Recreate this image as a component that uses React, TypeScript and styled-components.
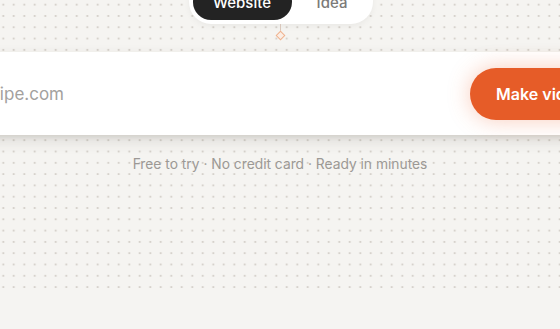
import styled, { createGlobalStyle } from "styled-components";

const GlobalStyle = createGlobalStyle`
    html, body {
        margin: 0;
        padding: 0;
        background: #f5f4f1;
        overflow: hidden;
        font-family: "Inter", "Noto Sans", sans-serif;
    }
`;

const modes = ["Website", "Idea"];

const ArrowIcon = () => (
    <svg width="16" height="16" viewBox="0 0 24 24" fill="none" stroke="currentColor" strokeWidth="2.2" strokeLinecap="round" strokeLinejoin="round">
        <path d="M5 12h14" />
        <path d="M13 6l6 6-6 6" />
    </svg>
);

export default function App() {
    return (
        <>
            <GlobalStyle />
            <Page>
                <Hero>
                    <Toggle>
                        {modes.map((mode, i) => (
                            <ToggleOption key={mode} $active={i === 0}>{mode}</ToggleOption>
                        ))}
                    </Toggle>
                    <Connector>
                        <Stem />
                        <Knot />
                    </Connector>
                    <Card>
                        <UrlInput placeholder="yourrecipe.com" readOnly />
                        <MakeButton>
                            Make video
                            <ArrowIcon />
                        </MakeButton>
                    </Card>
                    <Caption>Free to try · No credit card · Ready in minutes</Caption>
                </Hero>
                <Footer />
            </Page>
        </>
    );
}

const Page = styled.div`
    display: flex;
    flex-direction: column;
    width: 560px;
    height: 329px;
    overflow: hidden;
`;

const Hero = styled.div`
    display: flex;
    flex-direction: column;
    align-items: center;
    height: 290px;
    background-color: #f5f4f1;
    background-image: radial-gradient(circle, #d0cbc4 0.8px, transparent 1.2px);
    background-size: 10.5px 11.3px;
    background-position: -2px -1px;
`;

const Toggle = styled.div`
    display: flex;
    gap: 4px;
    margin-top: -20px;
    margin-left: 1px;
    padding: 4px;
    background: #ffffff;
    border-radius: 22px;
    box-shadow: 0 2px 6px rgba(0, 0, 0, 0.05);
`;

const ToggleOption = styled.div<{ $active: boolean }>`
    display: flex;
    align-items: center;
    justify-content: center;
    width: ${(p) => (p.$active ? "99px" : "73px")};
    height: 36px;
    border-radius: 18px;
    background: ${(p) => (p.$active ? "#232323" : "transparent")};
    color: ${(p) => (p.$active ? "#ffffff" : "#7b7a78")};
    font-size: 15px;
    font-weight: 500;
`;

const Connector = styled.div`
    display: flex;
    flex-direction: column;
    align-items: center;
    height: 28px;
`;

const Stem = styled.div`
    width: 1px;
    height: 9px;
    background: #d9c7bb;
`;

const Knot = styled.div`
    width: 5px;
    height: 5px;
    margin-top: -1px;
    border: 1px solid #efb28f;
    background: #fbeee5;
    transform: rotate(45deg);
`;

const Card = styled.div`
    display: flex;
    align-items: center;
    gap: 16px;
    flex-shrink: 0;
    width: 740px;
    height: 83px;
    box-sizing: border-box;
    padding: 0 16px 0 28px;
    background: #ffffff;
    box-shadow: 0 6px 14px rgba(60, 50, 40, 0.12), 0 3px 4px rgba(60, 50, 40, 0.08);
`;

const UrlInput = styled.input`
    flex: 1;
    min-width: 0;
    border: none;
    outline: none;
    background: transparent;
    font-family: "Inter", sans-serif;
    font-size: 17px;
    color: #222;
    margin-left: -2px;

    &::placeholder {
        color: #a3a19e;
    }
`;

const MakeButton = styled.div`
    display: flex;
    align-items: center;
    gap: 8px;
    height: 52px;
    padding: 0 25px 0 26px;
    border-radius: 26px;
    background: #e65c28;
    color: #ffffff;
    font-size: 16px;
    font-weight: 600;
    white-space: nowrap;
    box-shadow: 0 0 22px rgba(238, 110, 60, 0.35);
`;

const Caption = styled.div`
    margin-top: 21px;
    font-size: 13.8px;
    color: #9c9995;
`;

const Footer = styled.div`
    flex: 1;
    background: #f5f4f2;
`;
